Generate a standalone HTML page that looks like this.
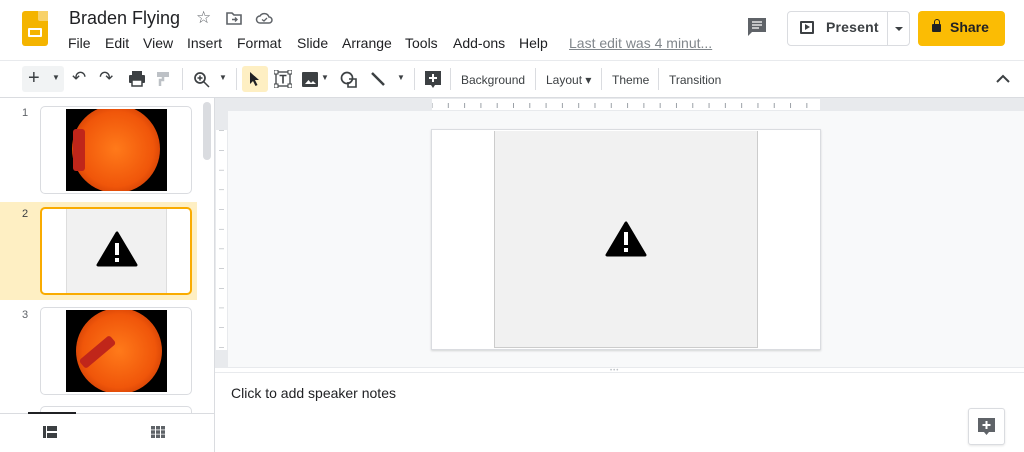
<!DOCTYPE html>
<html><head><meta charset="utf-8"><style>
*{box-sizing:border-box;margin:0;padding:0}
body{width:1024px;height:452px;overflow:hidden;background:#fff;font-family:"Liberation Sans",Arial,sans-serif;position:relative;color:#202124}
.a{position:absolute}
.m{position:absolute;top:35px;font-size:14px;color:#202124;white-space:nowrap}
.tb{font-size:12px;color:#3c4043}
.sep{position:absolute;top:68px;width:1px;height:22px;background:#dadce0}
</style></head><body>
<div class="a" style="left:22px;top:11px;width:26px;height:35px;background:#f4b400;border-radius:3px"></div>
<div class="a" style="left:38px;top:11px;width:10px;height:10px;background:#f8d26a;border-bottom-left-radius:2px"></div>
<div class="a" style="left:28px;top:28px;width:14px;height:9px;border:2px solid #fff;border-radius:1px"></div>
<div class="a" style="left:69px;top:8px;font-size:18px;color:#202124">Braden Flying</div>
<div class="a" style="left:196px;top:8px;font-size:17px;color:#5f6368">☆</div>
<svg class="a" style="left:226px;top:11px" width="16" height="14"><path d="M1 2h5l2 2h7v9H1z" fill="none" stroke="#5f6368" stroke-width="1.6"/><path d="M6 8.5h5M9 6.5l2 2-2 2" stroke="#5f6368" stroke-width="1.4" fill="none"/></svg>
<svg class="a" style="left:255px;top:11px" width="18" height="14"><path d="M5 12h9a3 3 0 000-6 5 5 0 00-9-1 3.5 3.5 0 000 7z" fill="none" stroke="#5f6368" stroke-width="1.5"/><path d="M7 8.5l2 1.5 3-3" stroke="#5f6368" stroke-width="1.3" fill="none"/></svg>
<div class="m" style="left:68px">File</div>
<div class="m" style="left:105px">Edit</div>
<div class="m" style="left:143px">View</div>
<div class="m" style="left:187px">Insert</div>
<div class="m" style="left:237px">Format</div>
<div class="m" style="left:297px">Slide</div>
<div class="m" style="left:342px">Arrange</div>
<div class="m" style="left:405px">Tools</div>
<div class="m" style="left:453px">Add-ons</div>
<div class="m" style="left:519px">Help</div>
<div class="a" style="left:569px;top:35px;font-size:14px;color:#80868b;text-decoration:underline">Last edit was 4 minut...</div>
<svg class="a" style="left:746px;top:16px" width="22" height="22"><path d="M2 2h18v14H6l-4 4z" fill="#5f6368"/><path d="M6 6h10M6 9h10M6 12h7" stroke="#fff" stroke-width="1.3"/></svg>
<div class="a" style="left:787px;top:11px;width:123px;height:35px;border:1px solid #dadce0;border-radius:4px"></div>
<div class="a" style="left:887px;top:12px;width:1px;height:33px;background:#dadce0"></div>
<div class="a" style="left:800px;top:21px;width:14px;height:13px;border:2px solid #3c4043;border-radius:1px"></div>
<div class="a" style="left:805px;top:24px;width:0;height:0;border-left:5px solid #3c4043;border-top:3.5px solid transparent;border-bottom:3.5px solid transparent"></div>
<div class="a" style="left:826px;top:19px;font-size:14px;color:#3c4043;font-weight:bold;letter-spacing:.2px">Present</div>
<div class="a" style="left:895px;top:27px;border-left:4px solid transparent;border-right:4px solid transparent;border-top:4px solid #3c4043"></div>
<div class="a" style="left:918px;top:11px;width:87px;height:35px;background:#fbbc04;border-radius:4px"></div>
<div class="a" style="left:932px;top:24px;width:9px;height:8px;background:#202124;border-radius:1px"></div>
<div class="a" style="left:933.5px;top:19px;width:6px;height:7px;border:1.6px solid #202124;border-bottom:none;border-radius:3px 3px 0 0"></div>
<div class="a" style="left:950px;top:19px;font-size:14px;font-weight:bold;color:#202124">Share</div>
<div class="a" style="left:0;top:60px;width:1024px;height:1px;background:#e8eaed"></div>
<div class="a" style="left:0;top:97px;width:1024px;height:1px;background:#dadce0"></div>
<div class="a" style="left:22px;top:66px;width:42px;height:26px;background:#f1f3f4;border-radius:3px"></div>
<div class="a" style="left:28px;top:67px;font-size:20px;color:#3c4043">+</div>
<div class="a tb" style="left:52px;top:73px;font-size:8px">▼</div>
<div class="a" style="left:72px;top:68px;font-size:17px;color:#3c4043">↶</div>
<div class="a" style="left:99px;top:68px;font-size:17px;color:#3c4043">↷</div>
<svg class="a" style="left:128px;top:71px" width="18" height="16"><rect x="4" y="0" width="10" height="4" fill="#3c4043"/><rect x="1" y="4" width="16" height="8" rx="1" fill="#3c4043"/><rect x="4" y="9" width="10" height="6" fill="#fff" stroke="#3c4043" stroke-width="1.5"/></svg>
<svg class="a" style="left:156px;top:71px" width="16" height="16"><rect x="1" y="1" width="12" height="5" fill="#bdc1c6"/><path d="M7 6v3H4v6" stroke="#bdc1c6" stroke-width="2.5" fill="none"/></svg>
<div class="sep" style="left:182px"></div>
<svg class="a" style="left:193px;top:71px" width="17" height="17"><circle cx="7" cy="7" r="5" fill="none" stroke="#3c4043" stroke-width="1.7"/><path d="M11 11l5 5M7 4.5v5M4.5 7h5" stroke="#3c4043" stroke-width="1.5"/></svg>
<div class="a tb" style="left:219px;top:73px;font-size:8px">▼</div>
<div class="sep" style="left:236px"></div>
<div class="a" style="left:242px;top:66px;width:26px;height:26px;background:#feefc3;border-radius:3px"></div>
<svg class="a" style="left:249px;top:71px" width="12" height="16"><path d="M1 1v12l3-3 2.5 5 2-1-2.5-5h4z" fill="#202124"/></svg>
<svg class="a" style="left:274px;top:70px" width="18" height="18"><rect x="2" y="2" width="14" height="14" fill="none" stroke="#3c4043" stroke-width="1.3"/><path d="M5.5 5.5h7M9 5.5v8" stroke="#3c4043" stroke-width="1.6"/><rect x="0" y="0" width="4" height="4" fill="#fff" stroke="#3c4043"/><rect x="14" y="0" width="4" height="4" fill="#fff" stroke="#3c4043"/><rect x="0" y="14" width="4" height="4" fill="#fff" stroke="#3c4043"/><rect x="14" y="14" width="4" height="4" fill="#fff" stroke="#3c4043"/></svg>
<svg class="a" style="left:302px;top:72px" width="16" height="15"><rect width="16" height="15" rx="1" fill="#3c4043"/><path d="M3 12l3.5-4 2.5 3 2-2 3 3z" fill="#fff"/></svg>
<div class="a tb" style="left:321px;top:73px;font-size:8px">▼</div>
<svg class="a" style="left:340px;top:71px" width="18" height="17"><circle cx="7" cy="7" r="5.5" fill="none" stroke="#3c4043" stroke-width="1.7"/><path d="M9 8h7v8H8v-5" fill="none" stroke="#3c4043" stroke-width="1.6"/></svg>
<svg class="a" style="left:370px;top:71px" width="16" height="16"><path d="M2 2l12 12" stroke="#3c4043" stroke-width="2.5"/></svg>
<div class="a tb" style="left:397px;top:73px;font-size:8px">▼</div>
<div class="sep" style="left:414px"></div>
<svg class="a" style="left:424px;top:70px" width="18" height="19"><path d="M1 1h16v14h-6l-2 3-2-3H1z" fill="#3c4043"/><path d="M9 4v8M5 8h8" stroke="#fff" stroke-width="2"/></svg>
<div class="sep" style="left:450px"></div>
<div class="a tb" style="left:461px;top:73px">Background</div>
<div class="sep" style="left:535px"></div>
<div class="a tb" style="left:546px;top:73px">Layout ▾</div>
<div class="sep" style="left:601px"></div>
<div class="a tb" style="left:612px;top:73px">Theme</div>
<div class="sep" style="left:658px"></div>
<div class="a tb" style="left:669px;top:73px">Transition</div>
<svg class="a" style="left:996px;top:74px" width="14" height="10"><path d="M1 8l6-6 6 6" fill="none" stroke="#3c4043" stroke-width="2"/></svg>
<div class="a" style="left:214px;top:98px;width:1px;height:354px;background:#dadce0"></div>
<div class="a" style="left:203px;top:102px;width:8px;height:58px;background:#dadce0;border-radius:4px"></div>
<div class="a" style="left:0;top:202px;width:197px;height:98px;background:#feefc3"></div>
<div class="a" style="left:22px;top:107px;font-size:11px;color:#5f6368">1</div>
<div class="a" style="left:22px;top:208px;font-size:11px;color:#3c4043">2</div>
<div class="a" style="left:22px;top:309px;font-size:11px;color:#5f6368">3</div>
<div class="a" style="left:40px;top:106px;width:152px;height:88px;border:1px solid #dadce0;border-radius:5px;background:#fff"></div>
<div class="a" style="left:66px;top:109px;width:101px;height:82px;background:#000;overflow:hidden"><div class="a" style="left:6px;top:-4px;width:88px;height:88px;border-radius:50%;background:radial-gradient(circle,#ff7a1a 0%,#f0560a 60%,#b22a00 95%)"></div><div class="a" style="left:7px;top:20px;width:12px;height:42px;background:#c0261a;border-radius:3px"></div></div>
<div class="a" style="left:40px;top:207px;width:152px;height:88px;border:2px solid #f9ab00;border-radius:5px;background:#fff"></div>
<div class="a" style="left:66px;top:209px;width:101px;height:84px;background:#f1f1f1;border-left:1px solid #ddd;border-right:1px solid #ddd"></div>
<svg class="a" style="left:96px;top:231px" width="42" height="37"><path d="M21 2L2 34h38z" fill="#000" stroke="#000" stroke-width="3" stroke-linejoin="round"/><rect x="19" y="12" width="4" height="12" fill="#fff"/><rect x="19" y="27" width="4" height="4" fill="#fff"/></svg>
<div class="a" style="left:40px;top:307px;width:152px;height:88px;border:1px solid #dadce0;border-radius:5px;background:#fff"></div>
<div class="a" style="left:66px;top:310px;width:101px;height:82px;background:#000;overflow:hidden"><div class="a" style="left:10px;top:-2px;width:86px;height:86px;border-radius:50%;background:radial-gradient(circle,#ff7a1a 0%,#f0560a 60%,#b22a00 95%)"></div><div class="a" style="left:26px;top:22px;width:11px;height:40px;background:#c0261a;border-radius:3px;transform:rotate(50deg)"></div></div>
<div class="a" style="left:40px;top:406px;width:152px;height:10px;border:1px solid #dadce0;border-bottom:none;border-radius:5px 5px 0 0"></div>
<div class="a" style="left:0;top:413px;width:214px;height:39px;background:#fff;border-top:1px solid #dadce0"></div>
<div class="a" style="left:28px;top:412px;width:48px;height:2px;background:#202124"></div>
<svg class="a" style="left:43px;top:426px" width="14" height="12"><rect x="0" y="0" width="3" height="12" fill="#3c4043"/><rect x="4" y="0" width="10" height="5" fill="#3c4043"/><rect x="4" y="7" width="10" height="5" fill="#3c4043"/></svg>
<svg class="a" style="left:151px;top:426px" width="14" height="12"><g fill="#5f6368"><rect x="0" y="0" width="4" height="3.5"/><rect x="5" y="0" width="4" height="3.5"/><rect x="10" y="0" width="4" height="3.5"/><rect x="0" y="4.3" width="4" height="3.5"/><rect x="5" y="4.3" width="4" height="3.5"/><rect x="10" y="4.3" width="4" height="3.5"/><rect x="0" y="8.5" width="4" height="3.5"/><rect x="5" y="8.5" width="4" height="3.5"/><rect x="10" y="8.5" width="4" height="3.5"/></g></svg>
<div class="a" style="left:215px;top:98px;width:809px;height:269px;background:#f8f9fa"></div>
<div class="a" style="left:215px;top:98px;width:809px;height:13px;background:#e8eaed"></div>
<div class="a" style="left:215px;top:98px;width:13px;height:269px;background:#e8eaed"></div>
<div class="a" style="left:432px;top:99px;width:388px;height:11px;background:#fff;background-image:repeating-linear-gradient(90deg,transparent 0 15px,#9aa0a6 15px 16px);background-size:16.3px 5px;background-repeat:repeat-x;background-position:1px 4px"></div>
<div class="a" style="left:216px;top:130px;width:11px;height:220px;background:#fff;background-image:repeating-linear-gradient(180deg,transparent 0 19px,#9aa0a6 19px 20px);background-size:5px 19.7px;background-repeat:repeat-y;background-position:3px 1px"></div>
<div class="a" style="left:431px;top:129px;width:390px;height:221px;background:#fff;border:1px solid #dadce0;box-shadow:0 1px 2px rgba(0,0,0,.15)"></div>
<div class="a" style="left:494px;top:131px;width:264px;height:217px;background:#f1f1f1;border-left:1px solid #ccc;border-right:1px solid #ccc;border-bottom:1px solid #ccc"></div>
<svg class="a" style="left:604px;top:220px" width="44" height="38"><path d="M22 3L3 35h38z" fill="#000" stroke="#000" stroke-width="3" stroke-linejoin="round"/><rect x="20" y="12" width="4" height="13" fill="#fff"/><rect x="20" y="28" width="4" height="4" fill="#fff"/></svg>
<div class="a" style="left:215px;top:367px;width:809px;height:6px;background:#fff;border-top:1px solid #e8eaed;border-bottom:1px solid #e8eaed"></div>
<div class="a" style="left:610px;top:368px;font-size:6px;color:#bdc1c6;letter-spacing:1px">•••</div>
<div class="a" style="left:231px;top:385px;font-size:14px;color:#202124">Click to add speaker notes</div>
<div class="a" style="left:968px;top:408px;width:37px;height:37px;border:1px solid #dadce0;border-radius:3px;background:#fff;box-shadow:0 1px 2px rgba(0,0,0,.1)"></div>
<svg class="a" style="left:977px;top:417px" width="19" height="20"><path d="M1 1h17v14h-6l-2.5 3-2.5-3H1z" fill="#5f6368"/><path d="M9.5 4v8M5.5 8h8" stroke="#fff" stroke-width="2"/></svg>
</body></html>
